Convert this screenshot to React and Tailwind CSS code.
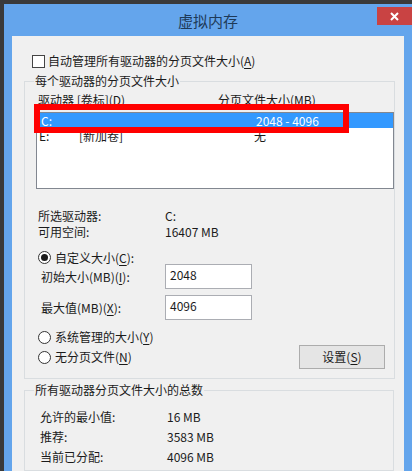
const font = "font-['Noto_Sans_CJK_SC','Noto_Sans',sans-serif]";

function Key({ children }) {
  return <u className="underline underline-offset-2 decoration-1">{children}</u>;
}

function Radio({ checked }) {
  return (
    <span className="w-[13px] h-[13px] rounded-full border border-[#333] bg-white flex items-center justify-center shrink-0">
      {checked && <span className="w-[7px] h-[7px] rounded-full bg-[#1b1b1b]" />}
    </span>
  );
}

function Row({ label, value, labelW = "w-[127px]" }) {
  return (
    <div className="flex h-[16px] items-center">
      <span className={labelW}>{label}</span>
      <span>{value}</span>
    </div>
  );
}

function Box({ title, className, children }) {
  return (
    <fieldset className={`border border-[#d9dde0] ml-[12px] w-[370px] ${className}`}>
      <legend className="ml-[9px] px-[1px] h-[16px] leading-[16px]">{title}</legend>
      {children}
    </fieldset>
  );
}

export default function App() {
  return (
    <div className={`w-[412px] h-[471px] overflow-hidden bg-[#3a3a3a] pl-[4px] pt-[4px] text-[12px] leading-[16px] text-[#1b1b1b] ${font}`}>
      <div className="h-full bg-[#64a5ec] flex flex-col">
        <div className="h-[32px] shrink-0 relative flex items-center justify-center pt-[2px]">
          <span className="text-[15px] text-[#1e3a58]">虚拟内存</span>
          <button className="absolute right-0 top-[3px] w-[35px] h-[18px] bg-[#c94343] flex items-center justify-center">
            <svg width="9" height="9" viewBox="0 0 9 9">
              <path d="M1 1L8 8M8 1L1 8" stroke="white" strokeWidth="2" />
            </svg>
          </button>
        </div>

        <div className="flex-1 ml-[8px] mr-[8px] bg-[#f0f0f0] relative flex flex-col">
          <div className="mt-[17px] ml-[20px] h-[16px] flex items-center gap-[3px]">
            <span className="w-[13px] h-[13px] border border-[#444] bg-white shrink-0" />
            <span>
              自动管理所有驱动器的分页文件大小(<Key>A</Key>)
            </span>
          </div>

          <Box title="每个驱动器的分页文件大小" className="mt-[4px] pb-[9px]">
            <div className="mt-[3px] ml-[13px] h-[16px] flex items-center">
              <span className="w-[180px]">驱动器 [卷标](D)</span>
              <span>分页文件大小(MB)</span>
            </div>
            <div className="mt-[4px] ml-[11px] w-[358px] h-[77px] border border-[#828790] bg-white">
              <div className="h-[15px] bg-[#3399ff] text-white flex items-center pl-[4px]">
                <span className="w-[215px]">C:</span>
                <span>2048 - 4096</span>
              </div>
              <div className="h-[16px] flex items-center pl-[2px]">
                <span className="w-[40px]">E:</span>
                <span className="w-[175px]">[新加卷]</span>
                <span>无</span>
              </div>
            </div>

            <div className="mt-[19px] ml-[13px]">
              <Row label="所选驱动器:" value="C:" />
              <Row label="可用空间:" value="16407 MB" />
            </div>

            <div className="mt-[10px] ml-[13px] h-[15px] flex items-center gap-[4px]">
              <Radio checked />
              <span>
                自定义大小(<Key>C</Key>):
              </span>
            </div>

            <div className="ml-[16px] flex items-center h-[25px] -mt-[1px]">
              <span className="w-[124px]">
                初始大小(MB)(<Key>I</Key>):
              </span>
              <div className="w-[87px] h-[25px] border border-[#abadb3] bg-white pl-[4px] pt-[2px]">2048</div>
            </div>
            <div className="ml-[16px] flex items-center h-[25px] mt-[6px]">
              <span className="w-[124px]">
                最大值(MB)(<Key>X</Key>):
              </span>
              <div className="w-[87px] h-[25px] border border-[#abadb3] bg-white pl-[4px] pt-[2px]">4096</div>
            </div>

            <div className="mt-[9px] ml-[13px] flex items-start">
              <div className="flex flex-col gap-[4px] w-[261px]">
                <div className="h-[16px] flex items-center gap-[4px]">
                  <Radio />
                  <span>
                    系统管理的大小(<Key>Y</Key>)
                  </span>
                </div>
                <div className="h-[16px] flex items-center gap-[4px]">
                  <Radio />
                  <span>
                    无分页文件(<Key>N</Key>)
                  </span>
                </div>
              </div>
              <button className="mt-[16px] w-[86px] h-[24px] border border-[#acacac] bg-[#e5e5e5] flex items-center justify-center">
                <span>
                  设置(<Key>S</Key>)
                </span>
              </button>
            </div>
          </Box>

          <Box title="所有驱动器分页文件大小的总数" className="mt-[3px] flex-1">
            <div className="mt-[11px] ml-[15px] flex flex-col gap-[4px]">
              <Row label="允许的最小值:" value="16 MB" />
              <Row label="推荐:" value="3583 MB" />
              <Row label="当前已分配:" value="4096 MB" />
            </div>
          </Box>

          <div className="absolute left-[22px] top-[68px] w-[315px] h-[29px] border-[6px] border-[#ff0000] pointer-events-none" />
        </div>
      </div>
    </div>
  );
}
